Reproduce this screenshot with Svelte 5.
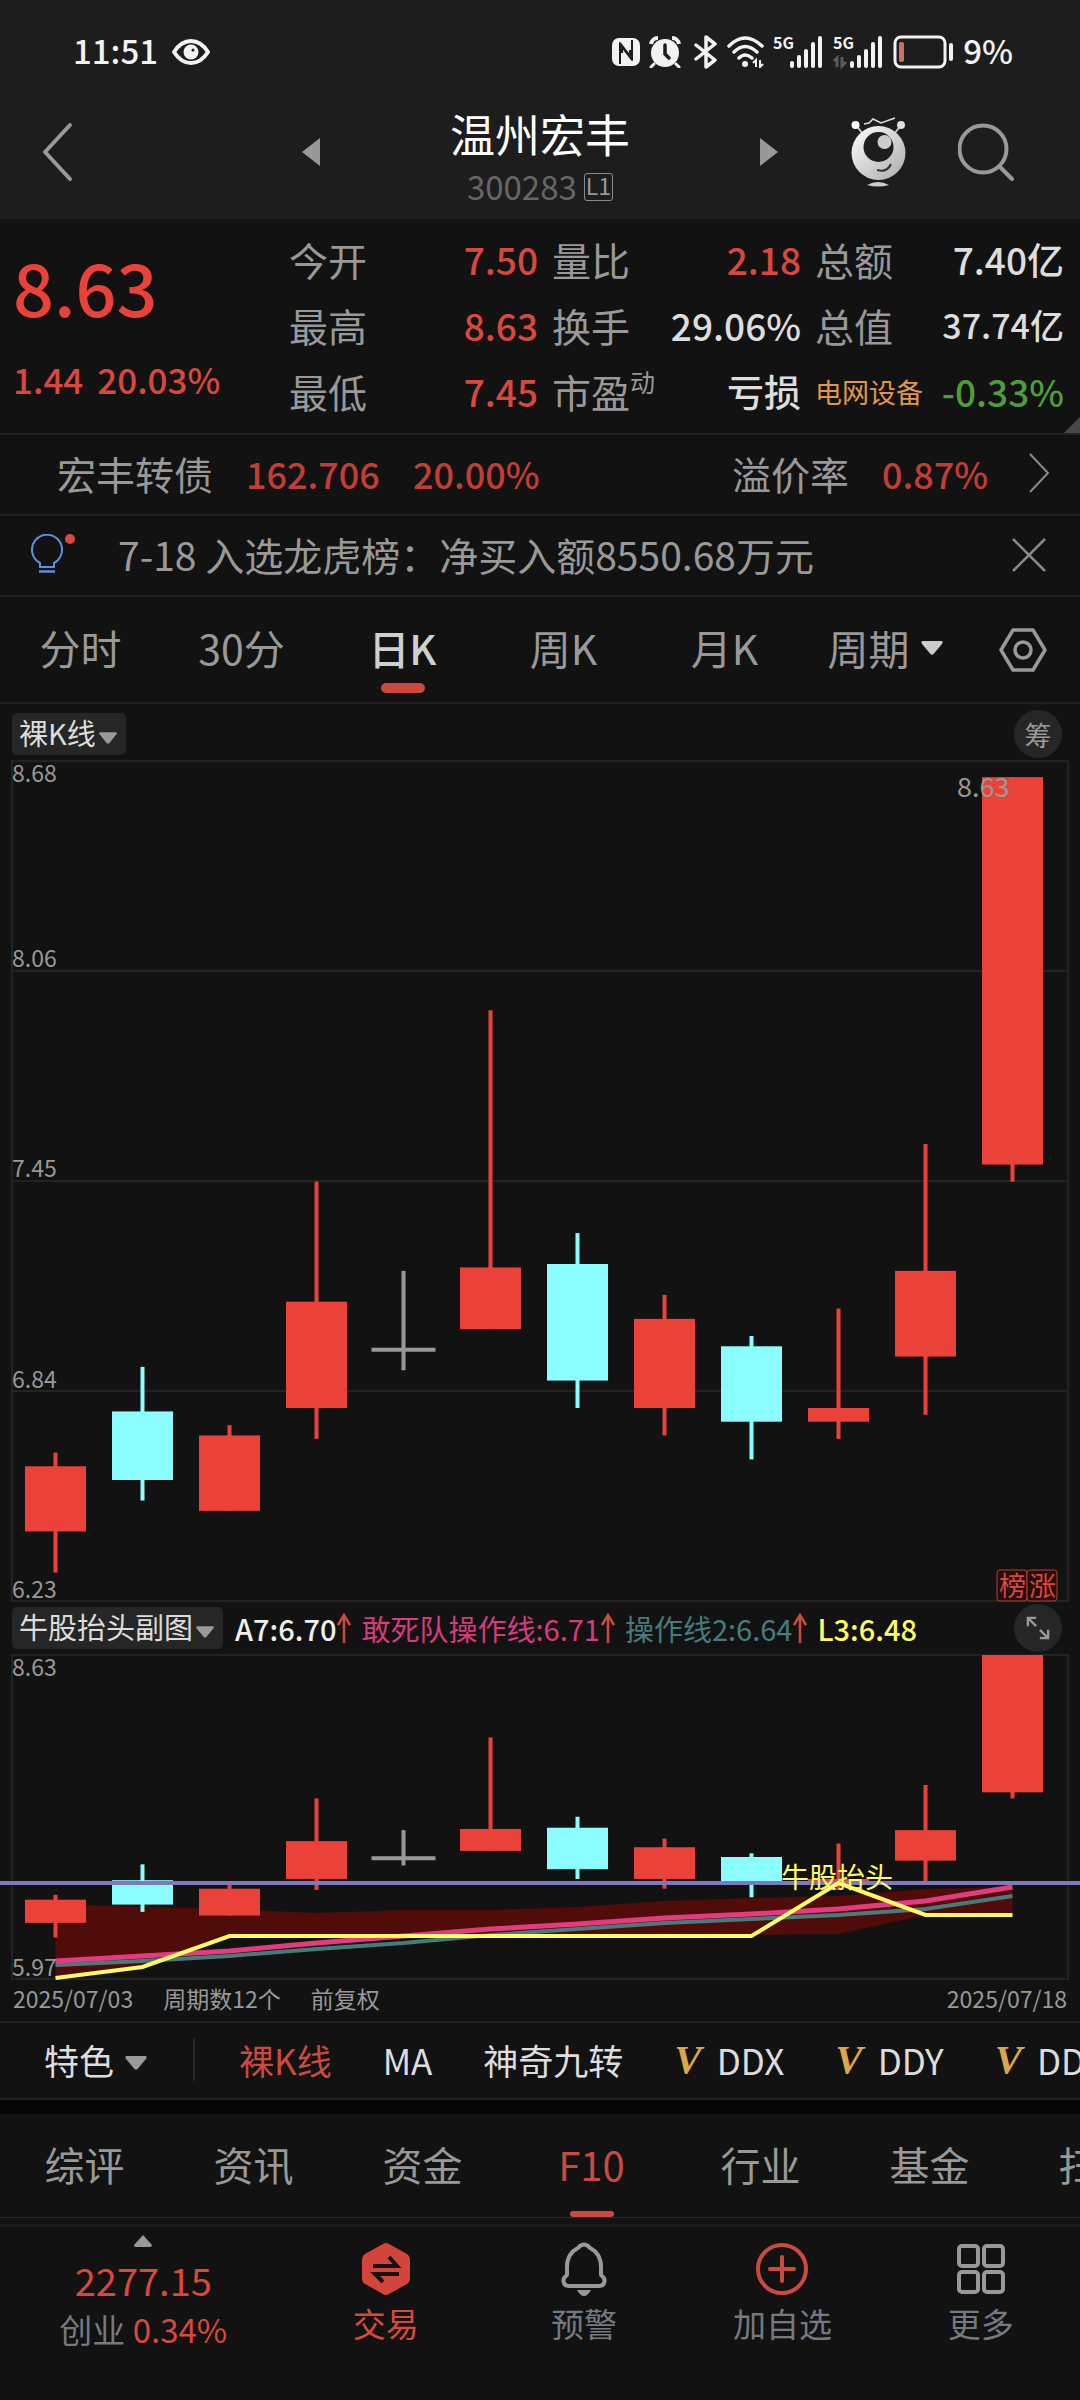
<script>
	const stats = [
		{ label: '今开', value: '7.50', tone: 'up' },
		{ label: '量比', value: '2.18', tone: 'up' },
		{ label: '总额', value: '7.40亿', tone: 'plain' },
		{ label: '最高', value: '8.63', tone: 'up' },
		{ label: '换手', value: '29.06%', tone: 'plain' },
		{ label: '总值', value: '37.74亿', tone: 'plain small' },
		{ label: '最低', value: '7.45', tone: 'up' },
		{ label: '市盈', sup: '动', value: '亏损', tone: 'plain' },
		{ label: '电网设备', value: '-0.33%', tone: 'down', sector: true }
	];

	const periods = ['分时', '30分', '日K', '周K', '月K'];
	const features = [
		{ name: '裸K线' },
		{ name: 'MA' },
		{ name: '神奇九转' },
		{ name: 'DDX', vip: true },
		{ name: 'DDY', vip: true },
		{ name: 'DDZ', vip: true }
	];
	const sections = ['综评', '资讯', '资金', 'F10', '行业', '基金', '扫雷'];

	let period = '日K';
	let feature = '裸K线';
	let section = 'F10';
	let noticeOpen = true;

	// open, close, high, low
	const candles = [
		[6.43, 6.62, 6.66, 6.31],
		[6.78, 6.58, 6.91, 6.52],
		[6.49, 6.71, 6.74, 6.49],
		[6.79, 7.1, 7.45, 6.7],
		[6.96, 6.96, 7.19, 6.9],
		[7.02, 7.2, 7.95, 7.02],
		[7.21, 6.87, 7.3, 6.79],
		[6.79, 7.05, 7.12, 6.71],
		[6.97, 6.75, 7.0, 6.64],
		[6.75, 6.79, 7.08, 6.7],
		[6.94, 7.19, 7.56, 6.77],
		[7.5, 8.63, 8.63, 7.45]
	];

	const colX = (i) => 55.5 + i * 87;
	const mainY = (p) => ((8.68 - p) * 840) / 2.45;
	const subY = (p) => Math.max(1, 325 - (p - 5.97) * 122);

	function shape([open, close, high, low], i, y) {
		const top = y(Math.max(open, close));
		const bottom = y(Math.min(open, close));
		const color = close > open ? '#ea4238' : close < open ? '#8bfdfe' : '#999';
		const flat = open === close;
		return {
			x: colX(i),
			half: flat ? 32 : 30.5,
			top: flat ? top - 2 : top,
			height: flat ? 4 : bottom - top,
			y1: y(high),
			y2: y(low),
			color
		};
	}

	const mainShapes = candles.map((c, i) => shape(c, i, mainY));
	const subShapes = candles.map((c, i) => shape(c, i, subY));

	const line = (ys) => ys.map((y, i) => `${colX(i)},${y}`).join(' ');
	const bandTop = [250, 253, 255, 259, 256, 256, 253, 247, 244, 242, 235, 233];
	const bandLow = [324, 313, 282, 282, 282, 282, 282, 282, 281, 280, 261, 261];
	const band = line(bandTop) + ' ' + line(bandLow).split(' ').reverse().join(' ');
	const pinkLine = line([307, 302, 297, 289, 282, 275, 270, 264, 260, 255, 247, 233]);
	const tealLine = line([311, 307, 302, 295, 289, 281, 275, 269, 265, 261, 255, 242]);
	const yellowLine = line([324, 313, 282, 282, 282, 282, 282, 282, 282, 229, 261, 261]);
</script>

{#snippet caret(w, h)}
	<svg class="caret" width={w} height={h} viewBox="0 0 20 13"><path d="M1 0H19Q20.500 1 19 3L11.500 12Q10 13.500 8.500 12L1 3Q-.5 1 1 0Z" fill="currentColor" /></svg>
{/snippet}

{#snippet rise()}
	<svg class="rise" width="14" height="30" viewBox="0 0 14 30" fill="none" stroke="#cf4a3c" stroke-width="2.500"><path d="M7 30V2M1 12 7 2l6 10" /></svg>
{/snippet}

{#snippet sticks(list)}
	{#each list as c}
		<rect x={c.x - 2} y={c.y1} width="4" height={c.y2 - c.y1} fill={c.color} />
		<rect x={c.x - c.half} y={c.top} width={c.half * 2} height={c.height} fill={c.color} />
	{/each}
{/snippet}

{#snippet signal()}
	<g fill="#f2f2f2">
		<rect x="17" y="25" width="4" height="7" rx="2" />
		<rect x="24" y="19" width="4" height="13" rx="2" />
		<rect x="31" y="13" width="4" height="19" rx="2" />
		<rect x="38" y="6" width="4" height="26" rx="2" />
		<rect x="45" y="0" width="4" height="32" rx="2" />
	</g>
{/snippet}

<div class="page">
	<div class="top">
		<div class="status">
			<span class="clock">11:51</span>
			<svg width="38" height="26" viewBox="0 0 38 26">
				<path d="M2 13Q9 2 19 2T36 13Q29 24 19 24T2 13Z" fill="none" stroke="#f2f2f2" stroke-width="4" stroke-linejoin="round" />
				<circle cx="19" cy="13" r="7.500" fill="#f2f2f2" />
				<circle cx="21" cy="11" r="1.500" fill="#1d1d1d" />
			</svg>
			<div class="icons">
				<svg width="30" height="30" viewBox="0 0 30 30">
					<rect x="1" y="1" width="28" height="28" rx="7" fill="#f2f2f2" />
					<path d="M9 27V6L19 19V13M21 3V23L11 10V16" fill="none" stroke="#1d1d1d" stroke-width="2" stroke-linejoin="round" />
				</svg>
				<svg width="32" height="32" viewBox="0 0 32 32">
					<circle cx="16" cy="17" r="14" fill="#f2f2f2" />
					<path d="M2 8A7 7 0 0 1 9 2M30 8A7 7 0 0 0 23 2" stroke="#f2f2f2" stroke-width="4" fill="none" />
					<path d="m5 28-3 3m25-3 3 3" stroke="#f2f2f2" stroke-width="3" stroke-linecap="round" />
					<path d="M16 9v9l4 4" stroke="#1d1d1d" stroke-width="3.500" fill="none" stroke-linecap="round" />
				</svg>
				<svg class="bt" width="26" height="34" viewBox="0 0 26 34">
					<path d="m3 10 19 15-9 7V2l9 7L3 24" fill="none" stroke="#f2f2f2" stroke-width="3.500" stroke-linejoin="round" stroke-linecap="round" />
				</svg>
				<svg width="38" height="32" viewBox="0 0 38 32">
					<g fill="none" stroke="#f2f2f2" stroke-width="3.500" stroke-linecap="round">
						<path d="M2 10Q18-6 35 10M7 16q11-11 23 0M12 22q6-6 13 0" />
					</g>
					<circle cx="18" cy="28" r="3" fill="#f2f2f2" />
					<path d="M29 31v-7l-3 3m7-3v7l3-3" fill="none" stroke="#f2f2f2" stroke-width="2" />
				</svg>
				<svg class="cell" width="52" height="32" viewBox="0 0 52 32">
					<text x="0" y="13" class="net">5G</text>
					{@render signal()}
				</svg>
				<svg class="cell" width="52" height="32" viewBox="0 0 52 32">
					<text x="0" y="13" class="net">5G</text>
					<path d="M4 31V22l-3 3m8-4v9l4-4" fill="none" stroke="#5a5a5a" stroke-width="3" />
					{@render signal()}
				</svg>
				<svg width="62" height="34" viewBox="0 0 62 34">
					<rect x="2" y="2" width="50" height="30" rx="6" fill="none" stroke="#f2f2f2" stroke-width="3" />
					<rect x="6" y="7" width="5" height="20" rx="2" fill="#cc7064" />
					<rect x="56" y="8" width="4" height="18" rx="2" fill="#f2f2f2" />
				</svg>
				<span class="clock">9%</span>
			</div>
		</div>

		<header>
			<div class="side left">
				<button aria-label="返回">
					<svg width="32" height="60" viewBox="0 0 32 60"><path d="M28 3 3 30l25 27" fill="none" stroke="#999" stroke-width="4" stroke-linecap="round" stroke-linejoin="round" /></svg>
				</button>
				<button aria-label="上一只">
					<svg width="18" height="28" viewBox="0 0 18 28"><path d="M18 0v28L0 14z" fill="#999" /></svg>
				</button>
			</div>
			<div class="title">
				<h1>温州宏丰</h1>
				<p>300283 <span class="level">L1</span></p>
			</div>
			<div class="side right">
				<button aria-label="下一只">
					<svg width="18" height="28" viewBox="0 0 18 28"><path d="M0 0v28l18-14z" fill="#999" /></svg>
				</button>
				<button class="robot" aria-label="智能助手">
					<svg width="56" height="70" viewBox="0 0 56 70">
						<defs>
							<linearGradient id="ball" x1="0" y1="0" x2="1" y2="1">
								<stop offset="0" stop-color="#fff" />
								<stop offset="1" stop-color="#aaa" />
							</linearGradient>
						</defs>
						<path d="m4 7 8 10M51 7l-8 10" stroke="#ccc" stroke-width="2" />
						<circle cx="4.500" cy="8" r="4" fill="#fff" />
						<circle cx="50" cy="8" r="4" fill="#ddd" />
						<path d="m13 7 5-1 4-4 8 4 14-5" fill="none" stroke="#ddd" stroke-width="1.500" />
						<circle cx="27.500" cy="36" r="27" fill="url(#ball)" />
						<circle cx="27.500" cy="30" r="15" fill="#1d1d1d" />
						<circle cx="33.500" cy="25" r="7" fill="#ccc" />
						<path d="M26 53q10 3 14-6" fill="none" stroke="#333" stroke-width="2" />
						<path d="M16 68q11-6 22 0-11 3-22 0z" fill="#ccc" />
					</svg>
				</button>
				<button aria-label="搜索">
					<svg width="56" height="58" viewBox="0 0 56 58" fill="none" stroke="#999" stroke-width="4">
						<circle cx="25" cy="26" r="23.500" />
						<path d="m42 44 12 12" stroke-linecap="round" />
					</svg>
				</button>
			</div>
		</header>
	</div>

	<section class="quote">
		<div class="price">
			<strong>8.63</strong>
			<div class="change"><span>1.44</span><span>20.03%</span></div>
		</div>
		<dl class="stats">
			{#each stats as s}
				<div>
					<dt class:sector={s.sector}>{s.label}{#if s.sup}<sup>{s.sup}</sup>{/if}</dt>
					<dd class={s.tone}>{s.value}</dd>
				</div>
			{/each}
		</dl>
		<svg class="corner" width="16" height="16" viewBox="0 0 16 16"><path d="M16 0v16H0z" fill="#484848" /></svg>
	</section>

	<a class="bond" href="#bond">
		<span>宏丰转债</span>
		<span class="num">162.706</span>
		<span class="num">20.00%</span>
		<span class="premium">溢价率</span>
		<span class="num">0.87%</span>
		<svg width="22" height="40" viewBox="0 0 22 40"><path d="m2 1 18 19L2 39" fill="none" stroke="#8a8a8a" stroke-width="2" /></svg>
	</a>

	{#if noticeOpen}
		<div class="notice">
			<svg class="bulb" width="46" height="42" viewBox="0 0 46 42">
				<path d="M9 33v-4A15 15 0 1 1 23 29v4z" fill="none" stroke="#5b8fe0" stroke-width="2" />
				<path d="M8 37.500H24" stroke="#5b8fe0" stroke-width="2.500" />
				<circle cx="39" cy="5" r="5" fill="#d9483d" />
			</svg>
			<span>7-18 入选龙虎榜：净买入额8550.68万元</span>
			<button aria-label="关闭" on:click={() => (noticeOpen = false)}>
				<svg width="34" height="34" viewBox="0 0 34 34"><path d="m1 1 32 32M33 1 1 33" stroke="#8a8a8a" stroke-width="2.500" /></svg>
			</button>
		</div>
	{/if}

	<nav class="periods">
		{#each periods as p}
			<button class:active={p === period} on:click={() => (period = p)}>{p}</button>
		{/each}
		<button class="more">周期 {@render caret(24, 14)}</button>
		<button class="gear" aria-label="设置">
			<svg width="48" height="44" viewBox="0 0 48 44" fill="none" stroke="#999" stroke-width="3.500" stroke-linejoin="round">
				<path d="M14 2H34L46 22 34 42H14L2 22z" />
				<circle cx="24" cy="22" r="8" />
			</svg>
		</button>
	</nav>

	<div class="toolbar main">
		<button class="pill">裸K线 {@render caret(18, 12)}</button>
		<button class="round">筹</button>
	</div>
	<svg class="chart" viewBox="0 0 1080 844">
		<g fill="none" stroke="#232323" stroke-width="2">
			<rect x="12" y="1" width="1056" height="840" />
			<path d="M12 211H1068M12 421H1068M12 631H1068" />
		</g>
		{@render sticks(mainShapes)}
		<g class="axis">
			<text x="12" y="22">8.68</text>
			<text x="12" y="207">8.06</text>
			<text x="12" y="417">7.45</text>
			<text x="12" y="628">6.84</text>
			<text x="12" y="838">6.23</text>
		</g>
		<text x="957" y="37" class="last">8.63</text>
		<g class="marks">
			<rect x="997" y="810" width="30" height="31" rx="3" />
			<rect x="1027" y="810" width="30" height="31" rx="3" />
			<text x="999" y="836">榜</text>
			<text x="1029" y="836">涨</text>
		</g>
	</svg>

	<div class="toolbar">
		<button class="pill">牛股抬头副图 {@render caret(18, 12)}</button>
		<div class="legend">
			<span class="white">A7:6.70{@render rise()}</span>
			<span class="pink">敢死队操作线:6.71{@render rise()}</span>
			<span class="teal">操作线2:6.64{@render rise()}</span>
			<span class="yellow">L3:6.48</span>
		</div>
		<button class="round" aria-label="全屏">
			<svg width="24" height="24" viewBox="0 0 26 26" fill="none" stroke="#999" stroke-width="2.500"><path d="M11 2H2v9M2 2l9 9M15 24h9v-9m0 9-9-9" /></svg>
		</button>
	</div>
	<svg class="chart" viewBox="0 0 1080 328">
		<rect x="12" y="1" width="1056" height="324" fill="none" stroke="#232323" stroke-width="2" />
		<polygon points={band} fill="#500c08" />
		{@render sticks(subShapes)}
		<g fill="none" stroke-width="4">
			<polyline points={tealLine} stroke="#467c7c" />
			<polyline points={pinkLine} stroke="#e23b80" stroke-width="5" />
			<path d="M0 229H1080" stroke="#7d79bd" />
			<polyline points={yellowLine} stroke="#fffb66" />
		</g>
		<text x="781" y="234" class="signal">牛股抬头</text>
		<g class="axis">
			<text x="12" y="22">8.63</text>
			<text x="12" y="322">5.97</text>
		</g>
	</svg>
	<div class="dates">
		<span>2025/07/03</span>
		<span>周期数12个</span>
		<span>前复权</span>
		<span class="end">2025/07/18</span>
	</div>

	<nav class="features">
		<button class="kind">特色 {@render caret(22, 14)}</button>
		{#each features as f}
			<button class:active={f.name === feature} on:click={() => (feature = f.name)}>
				{#if f.vip}<i>V</i>{/if}{f.name}
			</button>
		{/each}
	</nav>

	<nav class="sections">
		{#each sections as s}
			<button class:active={s === section} on:click={() => (section = s)}>{s}</button>
		{/each}
	</nav>

	<footer>
		<button class="index">
			<svg width="18" height="12" viewBox="0 0 18 12"><path d="M9 0 18 10q0 2-2 2H2q-2 0-2-2z" fill="#999" /></svg>
			<strong>2277.15</strong>
			<span>创业 <em>0.34%</em></span>
		</button>
		<button class="trade">
			<svg width="48" height="54" viewBox="0 0 48 54">
				<path d="M21 2q3-2 6 0l18 10q3 2 3 5v20q0 3-3 5L27 52q-3 2-6 0L3 42q-3-2-3-5V17q0-3 3-5z" fill="#d3453a" />
				<path d="M11 24H35L27 15M37 32H13l8 8" fill="none" stroke="#131313" stroke-width="4" />
			</svg>
			交易
		</button>
		<button>
			<svg width="46" height="54" viewBox="0 0 46 54">
				<path d="M17 6q6-7 12 0 12 6 11 22v5q5 4 3 8-1 3-5 3H8q-4 0-5-3-2-4 3-8v-5Q5 12 17 6z" fill="none" stroke="#999" stroke-width="4" stroke-linejoin="round" />
				<path d="M16 48h14q-7 12-14 0z" fill="#999" />
			</svg>
			预警
		</button>
		<button>
			<svg width="54" height="54" viewBox="0 0 54 54" fill="none" stroke="#cb4a40" stroke-width="4">
				<circle cx="27" cy="27" r="24" />
				<path d="M27 15v24M15 27h24" stroke-linecap="round" />
			</svg>
			加自选
		</button>
		<button>
			<svg width="48" height="54" viewBox="0 0 48 54" fill="none" stroke="#999" stroke-width="4">
				<rect x="2" y="4" width="19" height="20" rx="3" />
				<rect x="27" y="4" width="19" height="20" rx="3" />
				<rect x="2" y="30" width="19" height="20" rx="3" />
				<rect x="27" y="30" width="19" height="20" rx="3" />
			</svg>
			更多
		</button>
	</footer>
</div>

<style>
	:global(body) {
		background: #121212;
	}

	.page {
		min-height: 100vh;
		overflow: hidden;
		background: #121212;
		color: #999;
		font-family: 'Noto Sans CJK SC', sans-serif;
		font-size: 39px;
		line-height: 1;
	}

	.page * {
		box-sizing: border-box;
	}

	button {
		margin: 0;
		padding: 0;
		border: 0;
		background: none;
		color: inherit;
		font: inherit;
		white-space: nowrap;
		cursor: pointer;
	}

	svg {
		display: block;
		flex: none;
	}

	h1,
	p,
	dl,
	dd {
		margin: 0;
	}

	.top {
		background: #1d1d1d;
	}

	.status {
		display: flex;
		align-items: center;
		gap: 14px;
		height: 104px;
		padding: 0 67px 0 73px;
	}

	.clock {
		padding-bottom: 3px;
		color: #f2f2f2;
		font-size: 33px;
		font-weight: 500;
	}

	.icons {
		display: flex;
		align-items: center;
		gap: 8px;
		margin-left: auto;
	}

	.bt {
		margin-left: 4px;
	}

	.cell,
	.chart {
		overflow: visible;
	}

	.net {
		fill: #f2f2f2;
		font-size: 16px;
		font-weight: 700;
	}

	header {
		display: grid;
		grid-template-columns: 320fr 440fr 320fr;
		height: 115px;
	}

	.side {
		display: flex;
		align-items: center;
		justify-content: space-between;
		padding-bottom: 20px;
	}

	.left {
		padding-left: 42px;
	}

	.right {
		padding-right: 66px;
	}

	.robot {
		margin-left: 22px;
	}

	.title {
		display: flex;
		flex-direction: column;
		align-items: center;
		gap: 14px;
		padding-top: 7px;
	}

	h1 {
		color: #fff;
		font-size: 45px;
		font-weight: 400;
	}

	.title p {
		display: flex;
		align-items: center;
		gap: 7px;
		color: #666;
		font-size: 33px;
	}

	.level {
		padding: 0 1px 3px;
		border: 1px solid #8a8a8a;
		border-radius: 3px;
		color: #999;
		font-size: 23px;
	}

	.quote {
		position: relative;
		display: grid;
		grid-template-columns: 289fr 791fr;
		padding: 7px 0 9px;
		border-bottom: 2px solid #222;
	}

	.price {
		padding: 24px 0 0 13px;
		color: #d9483d;
		font-size: 35px;
		font-weight: 500;
		white-space: nowrap;
	}

	.price strong {
		color: #ea4238;
		font-size: 72px;
		font-weight: 500;
	}

	.change {
		display: flex;
		gap: 14px;
		margin-top: 39px;
	}

	.price strong {
		display: block;
	}

	.stats {
		display: grid;
		grid-template-columns: 249fr 249fr 249fr;
		gap: 0 14px;
		padding-right: 16px;
	}

	.stats div {
		display: flex;
		align-items: center;
		justify-content: space-between;
		height: 66px;
		white-space: nowrap;
	}

	.stats sup {
		font-size: 25px;
		line-height: 0;
		vertical-align: 16px;
	}

	.stats .sector {
		color: #e0974c;
		font-size: 27px;
	}

	dd {
		font-size: 37px;
		font-weight: 500;
	}

	.up {
		color: #d9483d;
	}

	.down {
		color: #4f9c3a;
	}

	.plain {
		color: #ddd;
	}

	.small {
		font-size: 34px;
	}

	.corner {
		position: absolute;
		right: 0;
		bottom: 0;
	}

	.bond {
		display: flex;
		align-items: center;
		height: 81px;
		padding: 0 30px 3px 57px;
		border-bottom: 2px solid #222;
		color: inherit;
		text-decoration: none;
	}

	.bond .num {
		margin-left: 33px;
		color: #c23e34;
		font-size: 36px;
		font-weight: 500;
	}

	.premium {
		margin-left: auto;
	}

	.bond svg {
		margin-left: 40px;
	}

	.notice {
		display: flex;
		align-items: center;
		height: 81px;
		padding: 0 34px 2px 31px;
		border-bottom: 2px solid #222;
		white-space: nowrap;
	}

	.bulb {
		margin-right: 41px;
	}

	.notice button {
		margin-left: auto;
	}

	.periods {
		display: flex;
		height: 107px;
		border-bottom: 2px solid #222;
		font-size: 41px;
	}

	.periods button {
		display: flex;
		flex: 161 0 0;
		align-items: center;
		justify-content: center;
		padding-bottom: 4px;
	}

	.periods .more {
		gap: 10px;
	}

	.more .caret {
		color: #ccc;
	}

	.periods .gear {
		flex-grow: 114;
		padding-bottom: 0;
	}

	.periods .active,
	.sections .active {
		position: relative;
	}

	.periods .active {
		color: #d0d0d0;
		font-weight: 500;
	}

	.active::after {
		position: absolute;
		left: calc(50% - 22px);
		width: 44px;
		border-radius: 5px;
		background: #cf483d;
	}

	.periods .active::after {
		content: '';
		bottom: 9px;
		height: 10px;
	}

	.toolbar {
		display: flex;
		align-items: center;
		height: 50px;
		padding: 0 18px 2px 12px;
		font-size: 29px;
	}

	.main {
		height: 56px;
		padding-top: 6px;
	}

	.pill {
		display: flex;
		align-items: center;
		gap: 3px;
		height: 42px;
		padding: 0 9px 3px 7px;
		border-radius: 5px;
		background: #262626;
		color: #ddd;
	}

	.pill .caret {
		margin-top: 10px;
		color: #999;
	}

	.round {
		display: grid;
		place-items: center;
		width: 48px;
		height: 48px;
		margin-left: auto;
		border-radius: 50%;
		background: #262626;
		font-size: 27px;
	}

	.legend {
		display: flex;
		gap: 10px;
		margin-left: 12px;
		font-weight: 500;
		white-space: nowrap;
	}

	.legend span {
		display: flex;
		align-items: center;
		gap: 1px;
	}

	.white {
		color: #eee;
	}

	.pink {
		color: #d63b7e;
		font-weight: 400;
	}

	.teal {
		color: #467c7c;
		font-weight: 400;
	}

	.yellow {
		color: #fffb66;
	}

	.chart {
		width: 100%;
		height: auto;
	}

	.axis {
		fill: #999;
		font-size: 23px;
	}

	.last {
		fill: #999;
		font-size: 27px;
	}

	.marks rect {
		fill: #2a0d0b;
		stroke: #a8453b;
	}

	.marks text {
		fill: #d9483d;
		font-size: 27px;
	}

	.signal {
		fill: #fffb66;
		font-size: 28px;
	}

	.dates {
		display: flex;
		align-items: center;
		gap: 30px;
		height: 41px;
		padding: 0 13px 6px;
		border-bottom: 2px solid #222;
		font-size: 23px;
	}

	.end {
		margin-left: auto;
	}

	.features {
		display: flex;
		align-items: center;
		gap: 51px;
		height: 77px;
		padding-bottom: 3px;
		overflow: hidden;
		border-bottom: 2px solid #222;
		color: #ddd;
		font-size: 35px;
	}

	.features button {
		display: flex;
		flex: none;
		align-items: center;
		gap: 15px;
	}

	.features .kind {
		gap: 11px;
		margin-right: -7px;
		padding: 4px 46px 4px 44px;
		border-right: 2px solid #242424;
	}

	.kind .caret {
		margin-top: 8px;
		color: #999;
	}

	.features .active {
		color: #cb4a40;
	}

	.features i {
		color: #dca64f;
		font: italic 700 41px/1 'Liberation Serif', serif;
	}

	.sections {
		display: flex;
		height: 118px;
		overflow: hidden;
		border-top: 14px solid #060606;
		border-bottom: 1px solid #2a2a2a;
		font-size: 40px;
	}

	.sections button {
		flex: 0 0 169px;
		padding-bottom: 4px;
	}

	.sections .active {
		color: #cb4a40;
	}

	.sections .active::after {
		content: '';
		bottom: 0;
		height: 6px;
		border-radius: 3px;
	}

	footer {
		display: grid;
		grid-template-columns: 286fr 198fr 198fr 198fr 198fr;
		margin-top: 6px;
		padding: 8px 0 52px;
		border-top: 3px solid #1c1c1c;
		color: #747a80;
		font-size: 33px;
	}

	footer button {
		display: flex;
		flex-direction: column;
		align-items: center;
		gap: 11px;
		padding-top: 7px;
	}

	.index strong {
		color: #d9483d;
		font-size: 38px;
		font-weight: 400;
	}

	footer .index {
		gap: 14px;
		padding-top: 0;
	}

	.index em {
		color: #d9483d;
		font-style: normal;
	}

	.trade {
		color: #d9483d;
	}
</style>
